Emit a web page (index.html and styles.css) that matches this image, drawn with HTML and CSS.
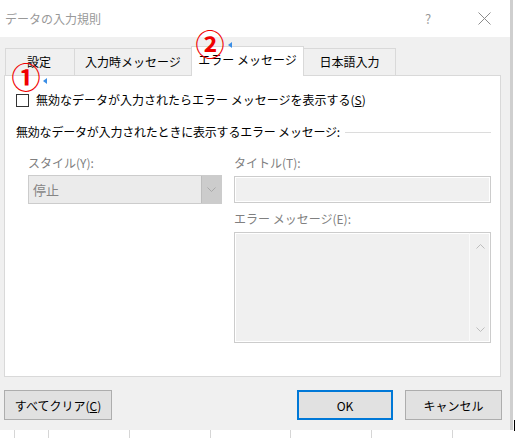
FILE: index.html
```html
<!DOCTYPE html>
<html lang="ja">
<head>
    <meta charset="UTF-8">
    <meta name="viewport" content="width=device-width, initial-scale=1.0">
    <title>データの入力規則</title>
    <link rel="stylesheet" href="styles.css">
</head>
<body>
    <div class="screen">
        <div class="top">
            <div class="dialog">
                <div class="titlebar">
                    <span class="title">データの入力規則</span>
                    <span class="help">?</span>
                    <span class="close">
                        <svg width="13" height="13" viewBox="0 0 13 13"><path d="M0.5 0.5L12.5 12.5M12.5 0.5L0.5 12.5" stroke="#8c8c8c" stroke-width="1" fill="none"/></svg>
                    </span>
                </div>
                <div class="body">
                    <div class="tabs">
                        <div class="tab tab-settings">設定</div>
                        <div class="tab tab-input">入力時メッセージ</div>
                        <div class="tab tab-error active">エラー メッセージ</div>
                        <div class="tab tab-ime">日本語入力</div>
                    </div>
                    <div class="panel">
                        <div class="check-row">
                            <span class="checkbox"></span>
                            <span>無効なデータが入力されたらエラー メッセージを表示する(<u>S</u>)</span>
                        </div>
                        <div class="group">
                            <span>無効なデータが入力されたときに表示するエラー メッセージ:</span>
                            <span class="rule"></span>
                        </div>
                        <div class="fields">
                            <div class="col-left">
                                <div class="label">スタイル(Y):</div>
                                <div class="select">
                                    <span class="select-value">停止</span>
                                    <span class="drop">
                                        <svg width="9" height="5" viewBox="0 0 9 5"><path d="M0.5 0.5L4.5 4.5L8.5 0.5" stroke="#a9a9a9" fill="none"/></svg>
                                    </span>
                                </div>
                            </div>
                            <div class="col-right">
                                <div class="label">タイトル(T):</div>
                                <div class="input"></div>
                                <div class="label msg-label">エラー メッセージ(E):</div>
                                <div class="textarea">
                                    <div class="scroll">
                                        <svg width="9" height="5" viewBox="0 0 9 5"><path d="M0.5 4.5L4.5 0.5L8.5 4.5" stroke="#bdbdbd" fill="none"/></svg>
                                        <svg width="9" height="5" viewBox="0 0 9 5"><path d="M0.5 0.5L4.5 4.5L8.5 0.5" stroke="#bdbdbd" fill="none"/></svg>
                                    </div>
                                </div>
                            </div>
                        </div>
                    </div>
                    <div class="buttons">
                        <button class="btn btn-clear">すべてクリア(<u>C</u>)</button>
                        <span class="spacer"></span>
                        <button class="btn btn-ok">OK</button>
                        <button class="btn btn-cancel">キャンセル</button>
                    </div>
                </div>

                <!-- 注釈 -->
                <span class="mark mark-1">①</span>
                <svg class="arrow arrow-1" width="4" height="6" viewBox="0 0 4 6"><path d="M0 3L4 0L4 6Z" fill="#3a8ee6"/></svg>
                <span class="mark mark-2">②</span>
                <svg class="arrow arrow-2" width="4" height="6" viewBox="0 0 4 6"><path d="M0 3L4 0L4 6Z" fill="#3a8ee6"/></svg>
            </div>
            <div class="edge"></div>
        </div>
        <div class="sheet"></div>
        <span class="cursor"></span>
    </div>
</body>
</html>
```

FILE: styles.css
```css
body {
    margin: 0;
    padding: 0;
    background-color: #fff;
    font-family: "Noto Sans CJK JP", sans-serif;
    font-size: 12px;
    color: #000;
}
.screen {
    position: relative;
    width: 519px;
    height: 438px;
    overflow: hidden;
}
.top {
    display: flex;
    height: 430px;
}
.dialog {
    position: relative;
    width: 510px;
    height: 430px;
    background-color: #f0f0f0;
}
.edge {
    width: 3px;
    background-color: #cfcfcf;
}
.sheet {
    height: 8px;
    background-image: repeating-linear-gradient(90deg, #d6d6d6 0 1px, transparent 1px 80.8px);
    background-position: 48px 0;
}
.cursor {
    position: absolute;
    left: 514px;
    top: 420px;
    width: 1px;
    height: 11px;
    background-color: #000;
}

/* タイトルバー */
.titlebar {
    display: flex;
    align-items: center;
    height: 37px;
    padding-left: 5px;
    background-color: #fff;
}
.title {
    flex: 1;
    color: #999;
    line-height: 16px;
}
.help {
    width: 46px;
    text-align: center;
    color: #999;
    font-size: 13px;
}
.close {
    display: flex;
    justify-content: center;
    width: 46px;
    margin-left: 10px;
    margin-right: 3px;
}

/* 本体 */
.body {
    padding: 9px 9px 0 4px;
}
.tabs {
    display: flex;
    align-items: flex-end;
    height: 29px;
    padding-left: 1px;
}
.tab {
    box-sizing: border-box;
    display: flex;
    align-items: center;
    justify-content: center;
    height: 27px;
    border: 1px solid #d9d9d9;
    border-right: none;
    border-bottom: none;
    line-height: 16px;
}
.tab-settings {
    width: 69px;
    padding-right: 2px;
}
.tab-input {
    width: 117px;
}
.tab-error {
    width: 113px;
}
.tab-ime {
    width: 92px;
    border-right: 1px solid #d9d9d9;
}
.tab.active {
    position: relative;
    z-index: 1;
    height: 30px;
    margin-bottom: -1px;
    padding-bottom: 3px;
    background-color: #fff;
    border-right: 1px solid #d9d9d9;
}
.tab.active + .tab {
    border-left: none;
}
.panel {
    box-sizing: border-box;
    height: 302px;
    padding: 16px 9px 0 11px;
    background-color: #fff;
    border: 1px solid #d9d9d9;
}
.check-row {
    display: flex;
    align-items: center;
    height: 16px;
    line-height: 16px;
}
.checkbox {
    box-sizing: border-box;
    width: 13px;
    height: 13px;
    margin-right: 7px;
    border: 1px solid #333;
    background-color: #fff;
}
.group {
    display: flex;
    align-items: center;
    height: 16px;
    margin-top: 16px;
    line-height: 16px;
    letter-spacing: -0.2px;
}
.rule {
    flex: 1;
    height: 1px;
    margin-left: 5px;
    background-color: #dcdcdc;
}
.fields {
    display: flex;
    gap: 12px;
    margin-top: 15px;
    padding-left: 12px;
}
.col-left {
    width: 194px;
}
.col-right {
    flex: 1;
}
.label {
    height: 16px;
    line-height: 16px;
    color: #808080;
}
.select {
    box-sizing: border-box;
    display: flex;
    height: 29px;
    margin-top: 4px;
    background-color: #ebebeb;
    border: 1px solid #cccccc;
}
.select-value {
    flex: 1;
    display: flex;
    align-items: center;
    padding-left: 4px;
    color: #858585;
    font-size: 13px;
}
.drop {
    display: flex;
    align-items: center;
    justify-content: center;
    width: 19px;
    background-color: #cccccc;
    border-left: 1px solid #bdbdbd;
}
.input {
    box-sizing: border-box;
    height: 27px;
    margin-top: 5px;
    background-color: #f0f0f0;
    border: 1px solid #cccccc;
    box-shadow: inset 0 0 0 1px #fff;
}
.msg-label {
    margin-top: 8px;
}
.textarea {
    box-sizing: border-box;
    display: flex;
    justify-content: flex-end;
    height: 111px;
    margin-top: 5px;
    background-color: #f0f0f0;
    border: 1px solid #cccccc;
    box-shadow: inset 0 0 0 1px #fff;
}
.scroll {
    display: flex;
    flex-direction: column;
    justify-content: space-between;
    align-items: center;
    width: 20px;
    padding: 11px 0 10px;
    border-left: 1px solid #fafafa;
}

/* ボタン */
.buttons {
    display: flex;
    gap: 12px;
    margin-top: 13px;
}
.spacer {
    flex: 1;
}
.btn {
    box-sizing: border-box;
    height: 30px;
    padding: 0;
    font-family: "Noto Sans CJK JP", sans-serif;
    font-size: 12px;
    color: #000;
    background-color: #e1e1e1;
    border: 1px solid #adadad;
}
.btn-clear {
    width: 108px;
}
.btn-ok {
    width: 96px;
    border-color: #0078d7;
    box-shadow: inset 0 0 0 1px #0078d7;
}
.btn-cancel {
    width: 97px;
    margin-right: -1px;
}

/* 注釈 */
.mark {
    position: absolute;
    z-index: 2;
    display: flex;
    align-items: center;
    justify-content: center;
    width: 24px;
    height: 24px;
    font-size: 29px;
    line-height: 24px;
    font-weight: 700;
    color: #f00000;
}
.mark-1 {
    left: 14px;
    top: 64px;
}
.mark-2 {
    left: 198px;
    top: 31px;
}
.arrow {
    position: absolute;
    z-index: 2;
}
.arrow-1 {
    left: 43px;
    top: 78px;
}
.arrow-2 {
    left: 228px;
    top: 42px;
}
```
